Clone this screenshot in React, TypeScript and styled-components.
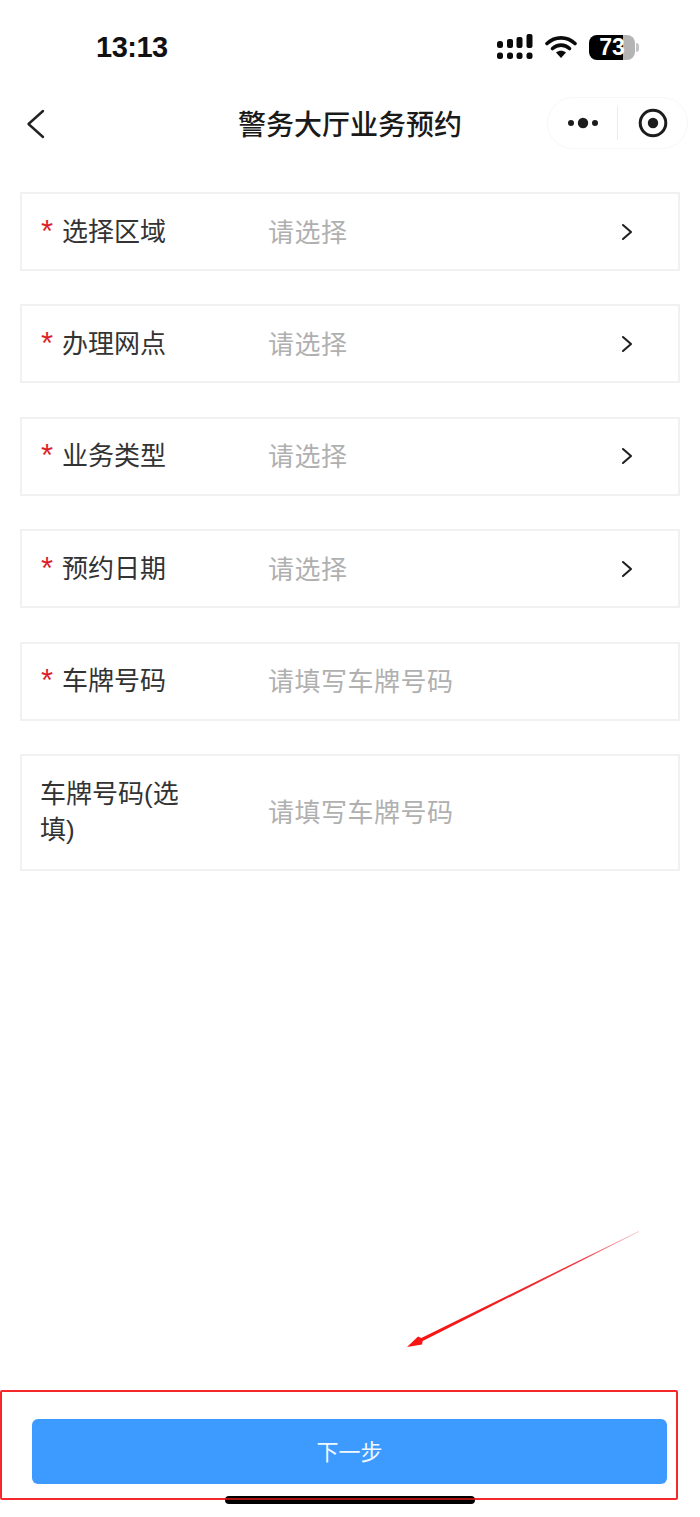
import styled, { createGlobalStyle } from "styled-components";

const GlobalStyle = createGlobalStyle`
  html, body {
    margin: 0;
    padding: 0;
    background: #fff;
  }
  * {
    box-sizing: border-box;
  }
`;

const Page = styled.div`
  position: relative;
  display: flex;
  flex-direction: column;
  width: 700px;
  height: 1517px;
  overflow: hidden;
  font-family: "Liberation Sans", "Noto Sans CJK SC", sans-serif;
  background: #fff;
`;

const StatusBar = styled.div`
  display: flex;
  align-items: center;
  justify-content: space-between;
  height: 94px;
  padding: 0 65px 0 96px;
`;

const Time = styled.div`
  font-size: 29px;
  font-weight: 700;
  color: #111;
  letter-spacing: -0.5px;
`;

const StatusIcons = styled.div`
  display: flex;
  gap: 12px;
  align-items: center;
`;

const Battery = styled.div`
  position: relative;
  display: flex;
  align-items: center;
  justify-content: center;
  width: 46px;
  height: 25px;
  font-size: 23px;
  font-weight: 700;
  color: #fff;
  background: linear-gradient(90deg, #000 0 74%, #b4b4b4 74% 100%);
  border-radius: 8px;

  &::after {
    position: absolute;
    top: 8px;
    right: -4px;
    width: 3px;
    height: 9px;
    content: "";
    background: #c4c4c4;
    border-radius: 0 3px 3px 0;
  }
`;

const NavBar = styled.div`
  position: relative;
  display: flex;
  align-items: center;
  justify-content: center;
  height: 52px;
  margin-top: 3px;
`;

const BackButton = styled.div`
  position: absolute;
  top: 12px;
  left: 26px;
  display: flex;
`;

const Title = styled.div`
  margin-top: 5px;
  font-size: 28px;
  font-weight: 500;
  line-height: 52px;
  color: #1a1a1a;
`;

const Capsule = styled.div`
  position: absolute;
  top: 0;
  right: 12px;
  display: flex;
  align-items: center;
  width: 141px;
  height: 52px;
  background: #fff;
  border: 1px solid #f7f7f7;
  border-radius: 26px;
`;

const CapsulePart = styled.div`
  display: flex;
  flex: 1;
  align-items: center;
  justify-content: center;
`;

const CapsuleDivider = styled.div`
  width: 1px;
  height: 34px;
  background: #ececec;
`;

const Form = styled.div`
  display: flex;
  flex-direction: column;
  gap: 33.4px;
  padding: 43px 20px 0;
`;

const Row = styled.div<{ $tall?: boolean }>`
  display: flex;
  align-items: center;
  height: ${(p) => (p.$tall ? "117px" : "79px")};
  padding: 0 45px 0 18px;
  border: 2px solid #f1f1f1;
`;

const Label = styled.div`
  display: flex;
  flex: none;
  width: 228px;
  padding-right: 88px;
  font-size: 26px;
  line-height: 36px;
  color: #333;
`;

const Star = styled.span`
  flex: none;
  width: 22px;
  padding-left: 1px;
  font-size: 31px;
  line-height: 36px;
  color: #dc1f2b;
`;

const Placeholder = styled.div`
  flex: 1;
  padding-top: 2px;
  font-size: 26px;
  line-height: 36px;
  letter-spacing: 0.5px;
  color: #b0b0b0;
`;

const Arrow = styled.div`
  display: flex;
`;

const Footer = styled.div`
  display: flex;
  margin-top: auto;
  padding: 0 33px 33px 32px;
`;

const NextButton = styled.button`
  flex: 1;
  height: 65px;
  padding: 0 0 4px;
  font-family: inherit;
  font-size: 22px;
  color: #f2f8ff;
  background: #3d9bff;
  border: none;
  border-radius: 6px;
`;

const HighlightBox = styled.div`
  position: absolute;
  top: 1390px;
  left: 0;
  width: 678px;
  height: 110px;
  pointer-events: none;
  border: 2px solid #f6282c;
  border-radius: 2px;
`;

const ArrowMark = styled.svg`
  position: absolute;
  top: 1225px;
  left: 400px;
`;

const HomeIndicator = styled.div`
  position: absolute;
  top: 1496px;
  left: 225px;
  width: 250px;
  height: 8px;
  background: linear-gradient(#000 0 25%, #a11 25% 50%, #000 50% 100%);
  border-radius: 4px;
`;

const SignalIcon = () => (
  <svg width="36" height="26" viewBox="0 0 36 26" fill="#0a0a0a">
    <rect x="0" y="7" width="6" height="7" rx="2.5" />
    <rect x="10" y="5" width="6" height="9" rx="2" />
    <rect x="19.5" y="3" width="6" height="11" rx="2" />
    <rect x="29.5" y="0" width="6" height="14" rx="2" />
    <rect x="0" y="18.5" width="6" height="6.5" rx="2.5" />
    <rect x="10" y="18.5" width="6" height="6.5" rx="2.5" />
    <rect x="19.5" y="18.5" width="6" height="6.5" rx="2.5" />
    <rect x="29.5" y="18.5" width="6" height="6.5" rx="2.5" />
  </svg>
);

const WifiIcon = () => (
  <svg width="32" height="24" viewBox="0 0 32 24" fill="none">
    <path d="M2 8.5C10 1 22 1 30 8.5" stroke="#0a0a0a" strokeWidth="3.6" strokeLinecap="round" />
    <path d="M7.5 13.5C12.5 9 19.5 9 24.5 13.5" stroke="#0a0a0a" strokeWidth="3.6" strokeLinecap="round" />
    <path d="M11 17.6C14 15 18 15 21 17.6L16 23Z" fill="#0a0a0a" />
  </svg>
);

const MoreIcon = () => (
  <svg width="30" height="12" viewBox="0 0 30 12" fill="#1c1c1c">
    <circle cx="3" cy="6" r="3" />
    <circle cx="15" cy="6" r="5.2" />
    <circle cx="27" cy="6" r="3" />
  </svg>
);

const RecordIcon = () => (
  <svg width="30" height="30" viewBox="0 0 30 30" fill="none">
    <circle cx="15" cy="15" r="12.8" stroke="#1c1c1c" strokeWidth="3" />
    <circle cx="15" cy="15" r="5.2" fill="#1c1c1c" />
  </svg>
);

const BackIcon = () => (
  <svg width="20" height="30" viewBox="0 0 20 30" fill="none">
    <path d="M17 2L2.5 15L17 28" stroke="#222" strokeWidth="2.4" strokeLinecap="round" strokeLinejoin="round" />
  </svg>
);

const ChevronIcon = () => (
  <svg width="12" height="18" viewBox="0 0 12 18" fill="none">
    <path d="M2 2L10 9L2 16" stroke="#1f1f1f" strokeWidth="2.1" strokeLinecap="round" strokeLinejoin="round" />
  </svg>
);

const fields = [
  { label: "选择区域", hint: "请选择", required: true, select: true },
  { label: "办理网点", hint: "请选择", required: true, select: true },
  { label: "业务类型", hint: "请选择", required: true, select: true },
  { label: "预约日期", hint: "请选择", required: true, select: true },
  { label: "车牌号码", hint: "请填写车牌号码", required: true, select: false },
  { label: "车牌号码(选填)", hint: "请填写车牌号码", required: false, select: false },
];

const App = () => {
  return (
    <Page>
      <GlobalStyle />
      <StatusBar>
        <Time>13:13</Time>
        <StatusIcons>
          <SignalIcon />
          <WifiIcon />
          <Battery>73</Battery>
        </StatusIcons>
      </StatusBar>
      <NavBar>
        <BackButton>
          <BackIcon />
        </BackButton>
        <Title>警务大厅业务预约</Title>
        <Capsule>
          <CapsulePart>
            <MoreIcon />
          </CapsulePart>
          <CapsuleDivider />
          <CapsulePart>
            <RecordIcon />
          </CapsulePart>
        </Capsule>
      </NavBar>
      <Form>
        {fields.map((field, i) => (
          <Row key={i} $tall={!field.required}>
            <Label>
              {field.required && <Star>*</Star>}
              <span>{field.label}</span>
            </Label>
            <Placeholder>{field.hint}</Placeholder>
            {field.select && (
              <Arrow>
                <ChevronIcon />
              </Arrow>
            )}
          </Row>
        ))}
      </Form>
      <Footer>
        <NextButton>下一步</NextButton>
      </Footer>
      <ArrowMark width="245" height="130" viewBox="0 0 245 130">
        <defs>
          <linearGradient id="fade" x1="1" y1="0" x2="0" y2="1">
            <stop offset="0" stopColor="#efa8ae" stopOpacity="0.7" />
            <stop offset="0.25" stopColor="#ee3a44" />
            <stop offset="0.65" stopColor="#f41a1c" />
            <stop offset="1" stopColor="#fa1410" />
          </linearGradient>
        </defs>
        <path d="M239 6L21.3 113.1L18 111.5L7 122L22 119.5L22.7 115.9L239 6.8Z" fill="url(#fade)" />
      </ArrowMark>
      <HighlightBox />
      <HomeIndicator />
    </Page>
  );
};

export default App;
